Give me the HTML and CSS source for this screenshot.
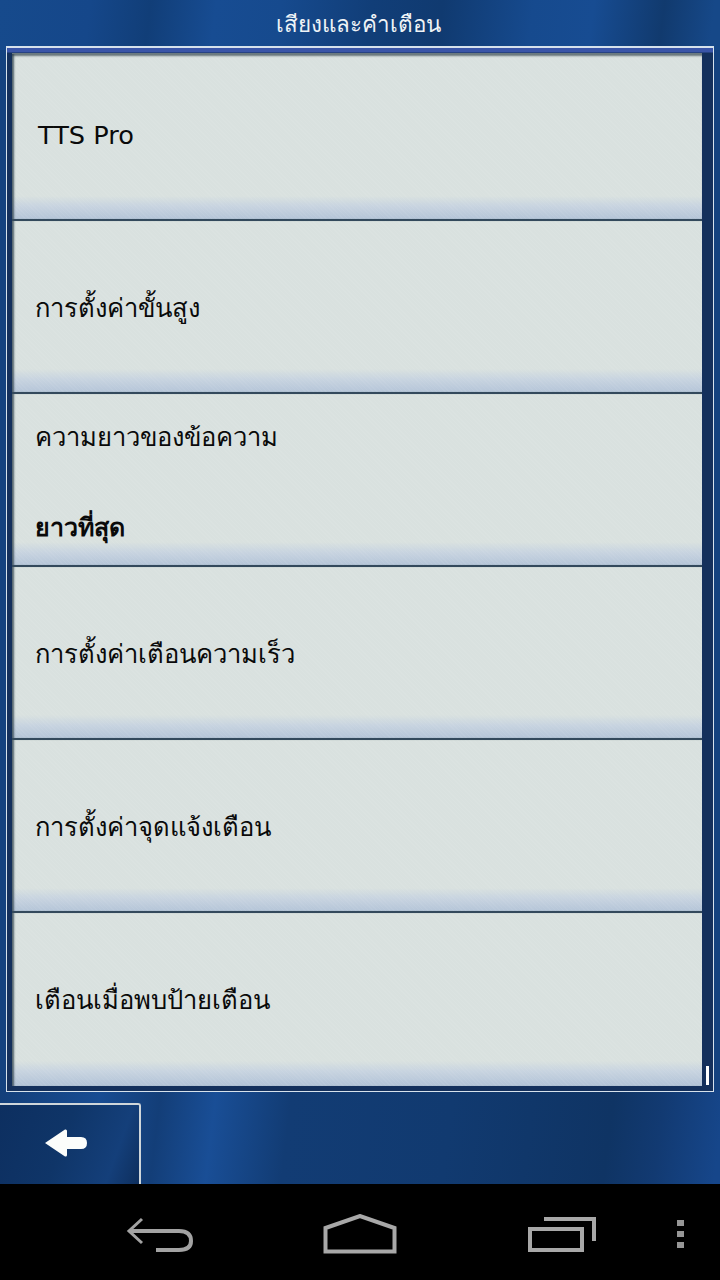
FILE: index.html
```html
<!DOCTYPE html>
<html>
<head>
  <meta charset="utf-8" />
  <meta name="viewport" content="width=device-width, initial-scale=1" />
  <title>เสียงและคำเตือน</title>
  <link rel="stylesheet" href="styles.css">
</head>
<body>
  <div class="screen">
    <div class="app">
      <h1 class="title">เสียงและคำเตือน</h1>
      <div class="frame">
        <div class="list">
          <div class="row"><span class="label latin">TTS Pro</span></div>
          <div class="row"><span class="label">การตั้งค่าขั้นสูง</span></div>
          <div class="row row-split">
            <span class="label">ความยาวของข้อความ</span>
            <span class="value">ยาวที่สุด</span>
          </div>
          <div class="row"><span class="label">การตั้งค่าเตือนความเร็ว</span></div>
          <div class="row"><span class="label">การตั้งค่าจุดแจ้งเตือน</span></div>
          <div class="row"><span class="label">เตือนเมื่อพบป้ายเตือน</span></div>
        </div>
        <div class="scroll"><div class="thumb"></div></div>
      </div>
      <div class="back">
        <svg width="44" height="30" viewBox="0 0 44 30">
          <path d="M1 15 L21 1.500 Q23 1 23 3 V9 H37 Q43 9 43 15 Q43 21 37 21 H23 V27 Q23 29 21 28.500 Z" fill="#fbfdfb"/>
        </svg>
      </div>
    </div>
    <div class="navbar">
      <svg class="nav-back" width="68" height="36" viewBox="0 0 68 36" fill="none" stroke="#a3a3a3">
        <path d="M16 2 L3 14 L16 26" stroke-width="3"/>
        <path d="M4 14 H53 Q65 14 65 24 Q65 33 53 33 H30" stroke-width="4"/>
      </svg>
      <svg class="nav-home" width="74" height="40" viewBox="0 0 74 40" fill="none" stroke="#a8a8a8" stroke-width="4">
        <path d="M2.500 37.500 V14 L37 2 L71.500 14 V37.500 Z"/>
      </svg>
      <svg class="nav-recent" width="70" height="36" viewBox="0 0 70 36" fill="none" stroke="#a8a8a8" stroke-width="4">
        <rect x="3" y="12" width="52" height="21"/>
        <path d="M17 2 H67 V24"/>
      </svg>
      <div class="nav-menu"><i></i><i></i><i></i></div>
    </div>
  </div>
</body>
</html>
```

FILE: styles.css
```css
* {
  box-sizing: border-box;
}
body {
  margin: 0;
  background: #000;
  font-family: "DejaVu Sans", "Noto Sans", sans-serif;
}
.screen {
  width: 720px;
  height: 1280px;
  display: flex;
  flex-direction: column;
  overflow: hidden;
}
.app {
  height: 1184px;
  display: flex;
  flex-direction: column;
  background:
    linear-gradient(97deg, #164a8c 0, #15478a 90px, #113e78 150px, #174c92 215px, #164a8e 280px, #113e78 370px, #103a70 440px, #164a8e 530px, #174c92 590px, #113a6e 660px, #164888 710px) 0 0 / 720px 50px no-repeat,
    linear-gradient(97deg, #133f7a 0, #184c92 100px, #133e78 160px, #194e96 215px, #123c74 290px, #113a70 450px, #0f3464 610px, #123a72 660px, #16468a 720px) 0 1090px / 720px 94px no-repeat,
    #14427f;
}
.title {
  height: 46px;
  margin: 0;
  padding-right: 4px;
  text-align: center;
  line-height: 48px;
  font-size: 22.400px;
  font-weight: normal;
  color: #eef3f6;
}
.frame {
  margin: 0 6px;
  height: 1046px;
  border: 1px solid #d6e2ec;
  border-top-width: 2px;
  padding-top: 5px;
  padding-left: 5px;
  padding-bottom: 6px;
  display: flex;
  background: linear-gradient(#3a55a8 0, #3a55a8 4px, #14305c 5px);
}
.list {
  width: 690px;
  border-top: 1px solid #6c7a80;
  border-bottom: 3px solid #3c4c5e;
}
.row {
  height: 173px;
  padding-left: 23px;
  padding-top: 3px;
  display: flex;
  align-items: center;
  border-bottom: 2px solid #33495c;
  background:
    repeating-linear-gradient(45deg, rgba(255, 255, 255, 0.05) 0 1px, transparent 1px 3px),
    linear-gradient(#d9e1df 0, #d9e1df 148px, #c8d4e0 158px, #b5c5d8 171px);
  box-shadow: inset 3px 0 2px -1px rgba(40, 60, 72, 0.75);
  font-size: 25.600px;
  color: #0a0a0a;
}
.row:first-child {
  height: 167px;
  padding-top: 0;
  padding-bottom: 3px;
  background:
    repeating-linear-gradient(45deg, rgba(255, 255, 255, 0.05) 0 1px, transparent 1px 3px),
    linear-gradient(#d9e1df 0, #d9e1df 142px, #c8d4e0 152px, #b5c5d8 165px);
  box-shadow: inset 3px 0 2px -1px rgba(40, 60, 72, 0.75), inset 0 3px 2px -1px rgba(60, 76, 84, 0.7);
}
.row:last-child {
  border-bottom: 0;
  padding-top: 0;
}
.row-split {
  flex-direction: column;
  align-items: flex-start;
  justify-content: flex-start;
  padding-top: 23px;
}
.label.latin {
  padding-left: 3px;
}
.value {
  margin-top: 50px;
  font-size: 25px;
  font-weight: bold;
}
.scroll {
  flex: 1;
  display: flex;
  align-items: flex-end;
  justify-content: flex-end;
  padding: 0 4px 0 0;
}
.thumb {
  width: 3px;
  height: 19px;
  background: #fff;
}
.back {
  width: 141px;
  height: 81px;
  margin-top: 11px;
  border-top: 2px solid #cfd6da;
  border-right: 2px solid #cfd6da;
  border-top-right-radius: 3px;
  background: linear-gradient(110deg, #0d2f60, #0f3568 45%, #143f7a 80%, #0e2f5e);
  display: flex;
  align-items: center;
  padding-left: 44px;
  padding-bottom: 4px;
}
.navbar {
  height: 96px;
  background: #000;
  position: relative;
}
.nav-back {
  position: absolute;
  left: 126px;
  top: 33px;
}
.nav-home {
  position: absolute;
  left: 323px;
  top: 30px;
}
.nav-recent {
  position: absolute;
  left: 527px;
  top: 33px;
}
.nav-menu {
  position: absolute;
  left: 677px;
  top: 36px;
  display: flex;
  flex-direction: column;
  gap: 5px;
}
.nav-menu i {
  display: block;
  width: 7px;
  height: 6px;
  background: #969696;
}
```
